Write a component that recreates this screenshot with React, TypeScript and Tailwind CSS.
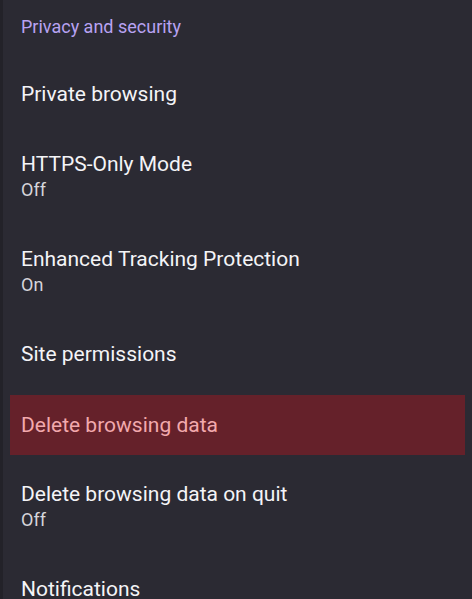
const rows: { title: string; sub?: string; danger?: boolean }[] = [
  { title: "Private browsing" },
  { title: "HTTPS-Only Mode", sub: "Off" },
  { title: "Enhanced Tracking Protection", sub: "On" },
  { title: "Site permissions" },
  { title: "Delete browsing data", danger: true },
  { title: "Delete browsing data on quit", sub: "Off" },
  { title: "Notifications" },
];

export default function App() {
  return (
    <div
      className="w-[472px] h-[599px] overflow-hidden bg-[#2b2a33] border-l-[3px] border-[#232229]"
      style={{ fontFamily: "Roboto, 'Noto Sans', sans-serif" }}
    >
      {/* SECTION HEADER */}
      <div className="h-[59px] pl-[18px] pt-[14px]">
        <span className="text-[18px] leading-[26px] text-[#b8a2f2]">
          Privacy and security
        </span>
      </div>

      {rows.map((row) =>
        row.danger ? (
          <div key={row.title} className="h-[70px] pt-[6px] pl-[7px] pr-[7px]">
            <div className="h-[60px] bg-[#65212a] pl-[11px] flex items-center">
              <span className="text-[21px] leading-[26px] text-[#f2a9ad]">
                {row.title}
              </span>
            </div>
          </div>
        ) : (
          <div
            key={row.title}
            className="py-[22px] pl-[18px] flex flex-col justify-center"
          >
            <span className="text-[21px] leading-[26px] text-[#f4f4f7]">
              {row.title}
            </span>
            {row.sub && (
              <span className="text-[18px] leading-[25px] text-[#d6d5dc]">
                {row.sub}
              </span>
            )}
          </div>
        ),
      )}
    </div>
  );
}
